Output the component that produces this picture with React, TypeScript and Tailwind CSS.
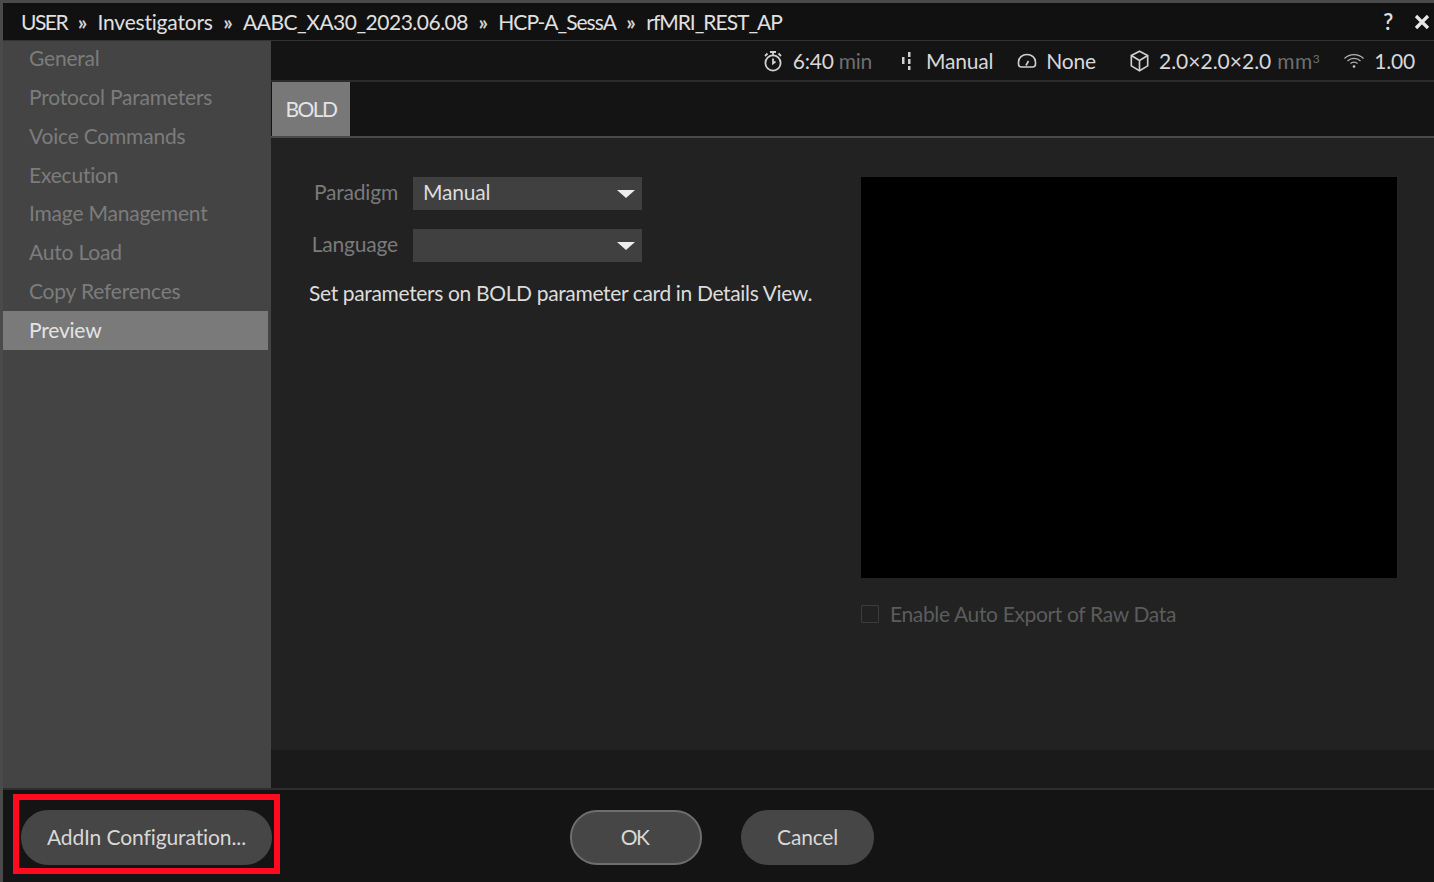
const navItems = [
  "General",
  "Protocol Parameters",
  "Voice Commands",
  "Execution",
  "Image Management",
  "Auto Load",
  "Copy References",
];

const crumbs = [
  { label: "USER", cls: "tracking-[-1.5px]" },
  { label: "Investigators", cls: "tracking-[-0.2px]" },
  { label: "AABC_XA30_2023.06.08", cls: "tracking-[-0.5px]" },
  { label: "HCP-A_SessA", cls: "tracking-[-1px]" },
  { label: "rfMRI_REST_AP", cls: "tracking-[-1px]" },
];

function Timer() {
  return (
    <svg width="20" height="22" viewBox="0 0 20 22" fill="none" stroke="#d0d0d0" strokeWidth="1.800">
      <circle cx="10" cy="13" r="7.600" />
      <path d="M10 8.500v5l2.500-2M7 2h6M10 2v3M15.500 3.500l2.500 2.500M4.500 3.500L2 6" />
    </svg>
  );
}

function Bars() {
  return (
    <svg width="12" height="20" viewBox="0 0 12 20" fill="#d0d0d0">
      <rect x="7" y="1" width="2.500" height="5" />
      <rect x="7" y="8" width="2.500" height="5" />
      <rect x="7" y="15" width="2.500" height="4" />
      <rect x="1" y="6" width="2.500" height="7" />
    </svg>
  );
}

function Gauge() {
  return (
    <svg width="20" height="18" viewBox="0 0 20 18" fill="none" stroke="#d0d0d0" strokeWidth="1.600">
      <path d="M4.500 15h11a3 3 0 0 0 3-3v-2a8.500 7.500 0 0 0-17 0v2a3 3 0 0 0 3 3z" />
      <path d="M9 13.500l2.500-4.500" />
    </svg>
  );
}

function Cube() {
  return (
    <svg width="23" height="24" viewBox="0 0 20 22" fill="none" stroke="#d0d0d0" strokeWidth="1.500">
      <path d="M10 2l7.500 4v9.500L10 20l-7.500-4.500V6z" />
      <path d="M2.500 6L10 10.500 17.500 6M10 10.500V20" />
    </svg>
  );
}

function Wifi() {
  return (
    <svg width="22" height="16" viewBox="0 0 22 16" fill="none" stroke="#b4b4b4" strokeWidth="1.200">
      <path d="M1.500 5.500a13.500 13.500 0 0 1 19 0M4.500 8a9.500 9.500 0 0 1 13 0M7.500 10.500a5 5 0 0 1 7 0" />
      <circle cx="11" cy="13.500" r="1.300" fill="#c8c8c8" stroke="none" />
    </svg>
  );
}

function Dropdown({ value }: { value?: string }) {
  return (
    <div className="flex h-[33px] w-[229px] items-center justify-between bg-[#404040] pl-[10px] pr-[7px] text-[#dcdcdc]">
      <span className="pb-[3px] leading-[26px]">{value}</span>
      <span className="h-0 w-0 border-x-[9px] border-t-[8px] border-x-transparent border-t-[#eeeeee]" />
    </div>
  );
}

export default function App() {
  return (
    <div className="relative flex h-[882px] w-[1434px] flex-col overflow-hidden border-l-[3px] border-t-[3px] border-[#4a4a4a] bg-[#141414] font-['Lato','Noto_Sans',sans-serif] text-[21px] tracking-[-0.2px]">
      <span className="absolute left-[1169px] top-[-3px] h-[3px] w-[16px] bg-[#8c8c8c]" />

      {/* title bar */}
      <div className="flex h-[38px] shrink-0 items-center justify-between border-b border-[#333333] bg-[#111111] pl-[18px] pr-[4px] text-[#e0e0e0]">
        <div className="flex items-center">
          {crumbs.map((c, i) => (
            <span key={c.label} className="flex items-center">
              {i > 0 && <span className="mx-[10.5px] font-bold text-[#d0d0d0]">»</span>}
              <span className={c.cls}>{c.label}</span>
            </span>
          ))}
        </div>
        <div className="flex items-center gap-[21px]">
          <span className="text-[22px] font-semibold">?</span>
          <svg width="16" height="16" viewBox="0 0 16 16" stroke="#e8e8e8" strokeWidth="3.200">
            <path d="M2 2l12 12M14 2L2 14" />
          </svg>
        </div>
      </div>

      <div className="flex min-h-0 flex-1">
        {/* sidebar */}
        <div className="flex w-[268px] shrink-0 flex-col bg-[#444444]">
          <div className="mt-[-2px] flex flex-col">
            {navItems.map((item) => (
              <div key={item} className="flex h-[38.8px] items-center pb-[1px] pl-[26px] text-[#7c7c7c]">
                {item}
              </div>
            ))}
            <div className="mr-[3px] flex h-[39px] items-center bg-[#7a7a7a] pl-[26px] text-[#e4e4e4]">Preview</div>
          </div>
        </div>

        <div className="flex min-w-0 flex-1 flex-col">
          {/* status row */}
          <div className="flex h-[41px] shrink-0 items-center justify-end border-b-2 border-[#2c2c2c] bg-[#141414] pr-[19px] pt-[1px] text-[#d8d8d8]">
            <Timer />
            <span className="ml-[10px]">6:40</span>
            <span className="ml-[5px] text-[#6e6e6e]">min</span>
            <span className="ml-[29px]"><Bars /></span>
            <span className="ml-[13px]">Manual</span>
            <span className="ml-[24px]"><Gauge /></span>
            <span className="ml-[9px]">None</span>
            <span className="ml-[32px]"><Cube /></span>
            <span className="ml-[8px] tracking-normal">2.0×2.0×2.0</span>
            <span className="ml-[6px] tracking-[0.5px] text-[#6e6e6e]">mm<sup className="text-[12px]">3</sup></span>
            <span className="ml-[23px]"><Wifi /></span>
            <span className="ml-[9px]">1.00</span>
          </div>

          {/* tabs */}
          <div className="flex h-[56px] shrink-0 border-b-2 border-[#4a4a4a] bg-[#141414] pl-[1px]">
            <div className="flex w-[78px] items-center justify-center bg-[#787878] tracking-[-1.5px] text-[#e4e4e4]">BOLD</div>
          </div>

          {/* content */}
          <div className="flex h-[612px] shrink-0 bg-[#222222] pt-[39px]">
            <div className="w-[590px] shrink-0 pl-[38px]">
              <div className="flex w-[333px] items-center justify-end gap-[15px]">
                <span className="pb-[3px] leading-[26px] text-[#7a7a7a]">Paradigm</span>
                <Dropdown value="Manual" />
              </div>
              <div className="mt-[19px] flex w-[333px] items-center justify-end gap-[15px]">
                <span className="pb-[3px] leading-[26px] text-[#7a7a7a]">Language</span>
                <Dropdown />
              </div>
              <p className="mt-[15px] whitespace-nowrap tracking-[-0.35px] text-[#dcdcdc]">
                Set parameters on BOLD parameter card in Details View.
              </p>
            </div>
            <div className="flex flex-col">
              <div className="h-[401px] w-[536px] bg-black" />
              <label className="mt-[20px] flex items-center gap-[11px] tracking-[-0.35px] text-[#5c5c5c]">
                <span className="h-[18px] w-[18px] rounded-[1px] border border-[#3c3c3c]" />
                Enable Auto Export of Raw Data
              </label>
            </div>
          </div>

          <div className="flex-1 bg-[#1a1a1a]" />
        </div>
      </div>

      {/* footer */}
      <div className="relative flex h-[94px] shrink-0 items-center border-t-2 border-[#2e2e2e] bg-[#141414] pl-[18px] pt-[3px] text-[#d8d8d8]">
        <button className="flex h-[55px] w-[251px] items-center justify-center rounded-[27px] bg-[#464646] pb-[2px] tracking-[-0.1px]">
          AddIn Configuration...
        </button>
        <span className="pointer-events-none absolute left-[10px] top-[4px] h-[80px] w-[267px] border-[6px] border-[#ff0a1e]" />
        <button className="ml-[298px] flex h-[55px] w-[132px] items-center justify-center rounded-[27px] border-2 border-[#6e6e6e] bg-[#464646] pb-[2px] pr-[3px] tracking-[-1.5px]">
          OK
        </button>
        <button className="ml-[39px] flex h-[55px] w-[133px] items-center justify-center rounded-[27px] bg-[#464646] pb-[2px]">
          Cancel
        </button>
      </div>
    </div>
  );
}
